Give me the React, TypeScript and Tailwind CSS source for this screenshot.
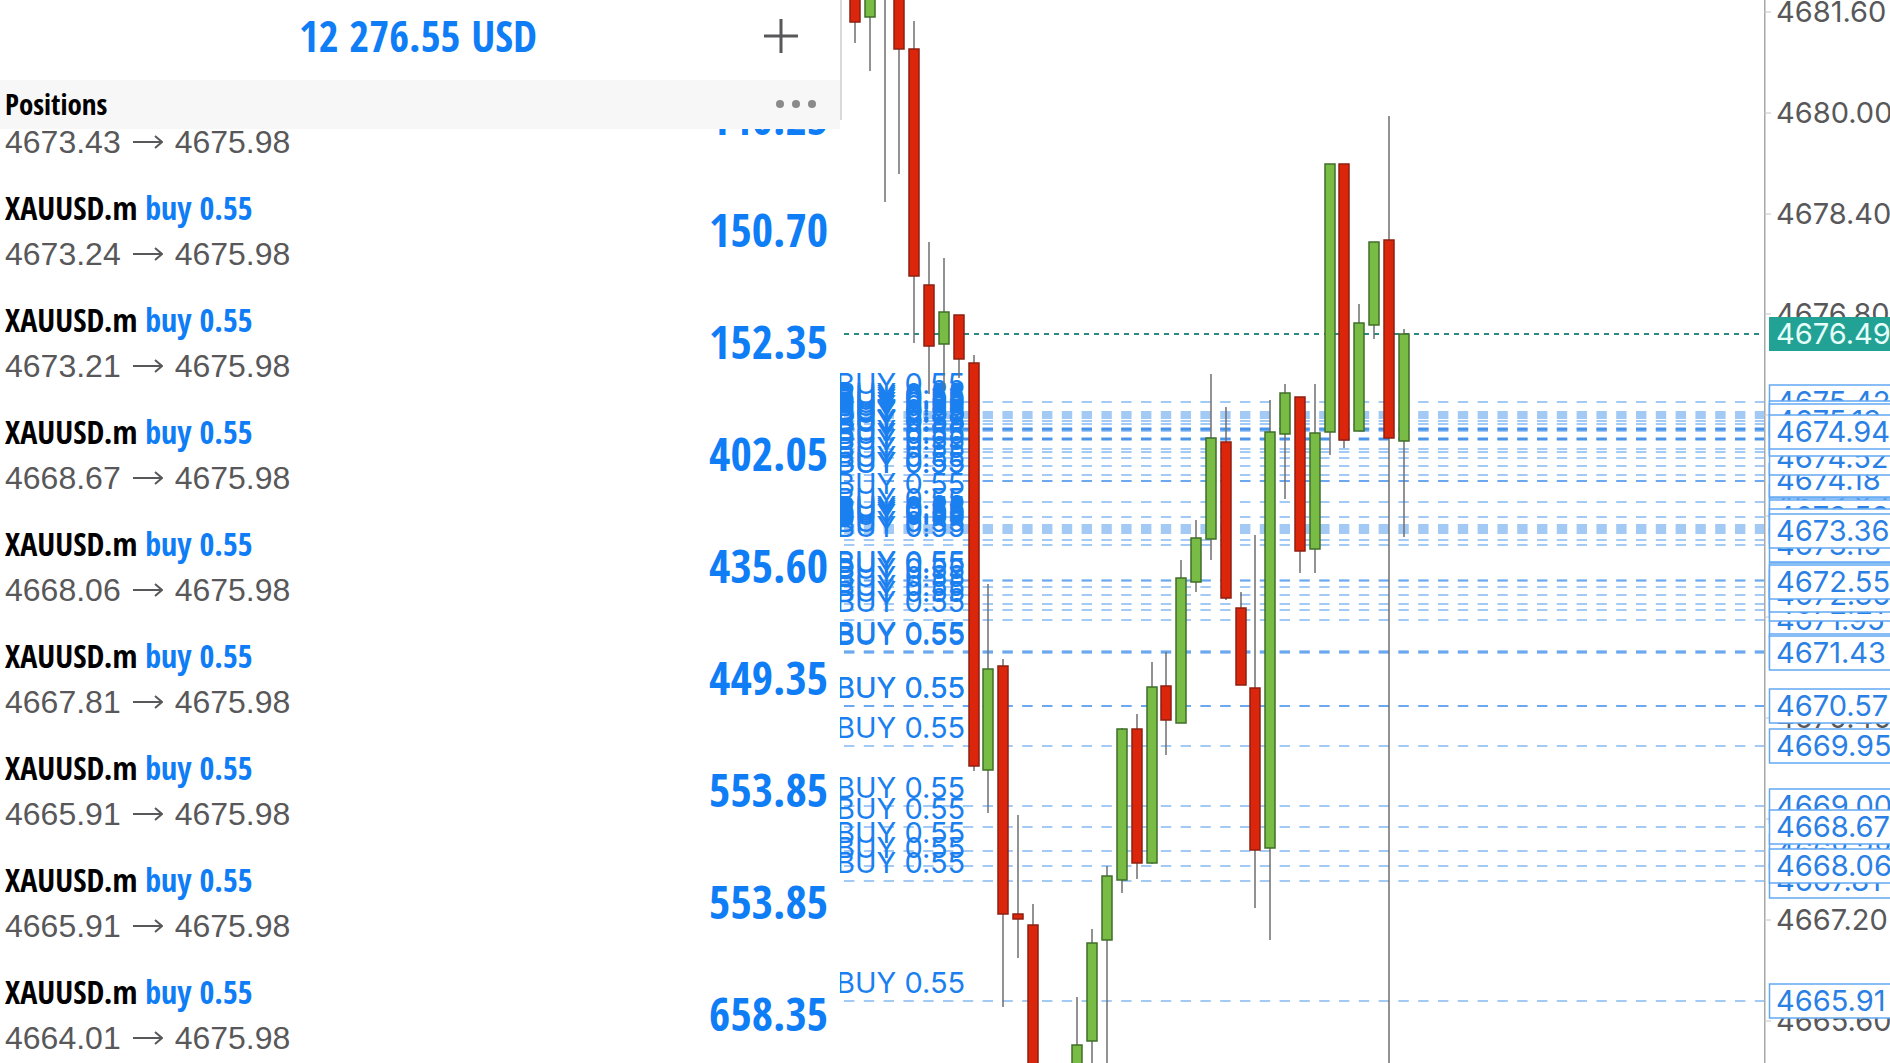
import { Fragment } from "react";

type Position = { open: string; profit: string };

const positions: Position[] = [
  { open: "4673.43", profit: "140.25" },
  { open: "4673.24", profit: "150.70" },
  { open: "4673.21", profit: "152.35" },
  { open: "4668.67", profit: "402.05" },
  { open: "4668.06", profit: "435.60" },
  { open: "4667.81", profit: "449.35" },
  { open: "4665.91", profit: "553.85" },
  { open: "4665.91", profit: "553.85" },
  { open: "4664.01", profit: "658.35" },
];

// slot, direction, high, body top, body bottom, low
type Candle = [number, "up" | "down", number, number, number, number];

const candles: Candle[] = [
  [0, "down", -10, -10, 22, 43],
  [1, "up", -10, -10, 17, 71],
  [2, "down", -10, -10, -5, 202],
  [3, "down", -10, -10, 49, 174],
  [4, "down", 21, 49, 276, 343],
  [5, "down", 242, 285, 346, 394],
  [6, "up", 258, 312, 344, 390],
  [7, "down", 315, 315, 359, 378],
  [8, "down", 355, 363, 766, 771],
  [9, "up", 584, 669, 770, 813],
  [10, "down", 659, 666, 914, 1007],
  [11, "down", 815, 914, 919, 958],
  [12, "down", 904, 925, 1090, 1090],
  [15, "up", 997, 1045, 1090, 1090],
  [16, "up", 929, 943, 1041, 1090],
  [17, "up", 866, 876, 940, 1090],
  [18, "up", 728, 729, 880, 893],
  [19, "down", 714, 729, 863, 879],
  [20, "up", 662, 687, 863, 864],
  [21, "down", 652, 686, 720, 755],
  [22, "up", 560, 578, 723, 723],
  [23, "up", 520, 538, 582, 592],
  [24, "up", 374, 438, 539, 560],
  [25, "down", 407, 442, 598, 600],
  [26, "down", 592, 608, 685, 685],
  [27, "down", 535, 688, 850, 908],
  [28, "up", 400, 432, 848, 940],
  [29, "up", 384, 393, 434, 499],
  [30, "down", 397, 397, 551, 573],
  [31, "up", 384, 433, 549, 573],
  [32, "up", 164, 164, 432, 455],
  [33, "down", 164, 164, 440, 448],
  [34, "up", 304, 323, 431, 431],
  [35, "up", 242, 242, 325, 339],
  [36, "down", 116, 240, 438, 1090],
  [37, "up", 329, 334, 441, 537],
];

// one entry per open order, stacked orders repeat
const orderLines = [
  402, 412, 414, 416, 418, 421, 424, 428, 429, 429, 430, 431, 438, 439, 439, 440, 449, 452, 458, 466, 475, 481,
  481, 502, 517, 525, 527, 529, 531, 533, 540, 545, 580, 581, 587, 595, 604, 610, 620, 651, 652, 653, 706, 706,
  746, 806, 827, 851, 866, 881, 1001,
];

// painted in order, later tags cover earlier ones
const tags: [number, string][] = [
  [545, "4673.15"],
  [502, "4673.82"],
  [517, "4673.59"],
  [526, "4673.44"],
  [531, "4673.36"],
  [481, "4674.15"],
  [480, "4674.18"],
  [458, "4674.52"],
  [438, "4674.84"],
  [439, "4674.82"],
  [402, "4675.42"],
  [418, "4675.16"],
  [421, "4675.13"],
  [432, "4674.94"],
  [587, "4672.48"],
  [620, "4671.95"],
  [604, "4672.21"],
  [595, "4672.36"],
  [580, "4672.56"],
  [582, "4672.55"],
  [651, "4671.45"],
  [653, "4671.43"],
  [706, "4670.57"],
  [746, "4669.95"],
  [881, "4667.81"],
  [851, "4668.28"],
  [806, "4669.00"],
  [827, "4668.67"],
  [866, "4668.06"],
  [1001, "4665.91"],
];

const gridTicks: [number, string][] = [
  [12, "4681.60"],
  [113, "4680.00"],
  [214, "4678.40"],
  [314, "4676.80"],
  [415, "4675.20"],
  [516, "4673.60"],
  [617, "4672.00"],
  [718, "4670.40"],
  [819, "4668.80"],
  [920, "4667.20"],
  [1021, "4665.60"],
];

const slotX = (slot: number) => Math.round(15 + slot * 14.83);

function PositionRow({ open, profit }: Position) {
  return (
    <li className="flex h-28 shrink-0 items-center justify-between pr-3 pl-[5px]">
      <div>
        <div className="font-['Open_Sans_Condensed','Noto_Sans_Condensed',sans-serif] text-[32px] leading-[46px] font-semibold text-black">
          XAUUSD.m <span className="text-[#0f7df5]">buy 0.55</span>
        </div>
        <div className="flex items-center gap-3 text-[32px] leading-[46px] text-[#58585a]">
          {open}
          <svg className="h-4 w-[30px]" viewBox="0 0 30 16" fill="none" stroke="currentColor" strokeWidth="2">
            <path d="M0 8H29M22 2L29 8L22 14" />
          </svg>
          4675.98
        </div>
      </div>
      <div className="pb-1 font-['Open_Sans_Condensed','Noto_Sans_Condensed',sans-serif] text-[46px] leading-[46px] font-semibold text-[#0f7df5]">
        {profit}
      </div>
    </li>
  );
}

function PositionsPanel() {
  return (
    <section className="flex min-w-0 flex-col overflow-hidden">
      <header className="grid h-20 shrink-0 grid-cols-[1fr_auto_1fr] items-center pr-[42px] pb-2 pl-[38px]">
        <h1 className="col-start-2 font-['Open_Sans_Condensed','Noto_Sans_Condensed',sans-serif] text-[43px] leading-[48px] font-semibold text-[#0f7df5]">
          12 276.55 USD
        </h1>
        <button type="button" aria-label="New order" className="justify-self-end">
          <svg className="size-[34px]" viewBox="0 0 34 34" stroke="#58585a" strokeWidth="3">
            <path d="M17 0V34M0 17H34" />
          </svg>
        </button>
      </header>

      <div className="flex h-[49px] shrink-0 items-center justify-between bg-[#f7f7f7] pr-6 pb-px pl-[5px]">
        <h2 className="font-['Open_Sans_Condensed','Noto_Sans_Condensed',sans-serif] text-[29px] leading-8 font-bold text-black">
          Positions
        </h2>
        <button type="button" aria-label="More">
          <svg className="h-2 w-10" viewBox="0 0 40 8" fill="#8a8a8c">
            <circle cx="4" cy="4" r="4" />
            <circle cx="20" cy="4" r="4" />
            <circle cx="36" cy="4" r="4" />
          </svg>
        </button>
      </div>

      <div className="min-h-0 flex-1 overflow-hidden">
        <ul className="-mt-[66px] flex flex-col">
          {positions.map((position, i) => (
            <PositionRow key={i} {...position} />
          ))}
        </ul>
      </div>
    </section>
  );
}

function Chart() {
  return (
    <svg className="h-full min-w-0 flex-1 font-[Inter,sans-serif]">
      <line x1="1" x2="1" y1="0" y2="120" stroke="#b4b4b8" strokeWidth="1" />

      {orderLines.map((y, i) => (
        <Fragment key={i}>
          <line x1="4" x2="100%" y1={y} y2={y} stroke="#1a78e6" strokeOpacity="0.4" strokeWidth="2" strokeDasharray="10.4 9.4" />
          <text x="-4" y={y - 8} fontSize="29" fill="#1a80f0">
            BUY 0.55
          </text>
        </Fragment>
      ))}

      <line x1="4" x2="100%" y1="334" y2="334" stroke="#2b8a86" strokeWidth="2" strokeDasharray="5 5" />

      {candles.map(([slot, dir, high, top, bottom, low]) => (
        <g key={slot}>
          <line x1={slotX(slot)} x2={slotX(slot)} y1={high} y2={low} stroke="#6e6e6e" strokeWidth="1.5" />
          <rect
            x={slotX(slot) - 5}
            y={top}
            width="10"
            height={bottom - top}
            fill={dir === "up" ? "#78bb45" : "#dc260c"}
            stroke={dir === "up" ? "#3f6e2a" : "#8e1f10"}
            strokeWidth="1.5"
          />
        </g>
      ))}
    </svg>
  );
}

function PriceAxis() {
  return (
    <svg className="h-full w-[126px] shrink-0 font-[Inter,sans-serif]" fontSize="29">
      <line x1="0" x2="0" y1="0" y2="100%" stroke="#a8a8a8" strokeWidth="3" />

      {gridTicks.map(([y, label]) => (
        <g key={label}>
          <line x1="0" x2="7" y1={y} y2={y} stroke="#c4c4c4" strokeWidth="1" />
          <text x="12" y={y + 10} fill="#58585a">
            {label}
          </text>
        </g>
      ))}

      {tags.map(([y, label]) => (
        <g key={label}>
          <rect x="5.5" y={y - 17} width="140" height="34" fill="#fff" stroke="#62a8f4" strokeWidth="1.5" />
          <text x="12" y={y + 10} fill="#2a80e4">
            {label}
          </text>
        </g>
      ))}

      <rect x="5" y="317" width="140" height="34" fill="#22a195" />
      <text x="12" y="344" fill="#e6fffb">
        4676.49
      </text>
    </svg>
  );
}

export default function App() {
  return (
    <main className="grid h-screen grid-cols-[4fr_5fr] overflow-hidden bg-white font-['Liberation_Sans',Arial,sans-serif]">
      <PositionsPanel />
      <section className="flex min-w-0 overflow-hidden" aria-label="XAUUSD chart">
        <Chart />
        <PriceAxis />
      </section>
    </main>
  );
}
